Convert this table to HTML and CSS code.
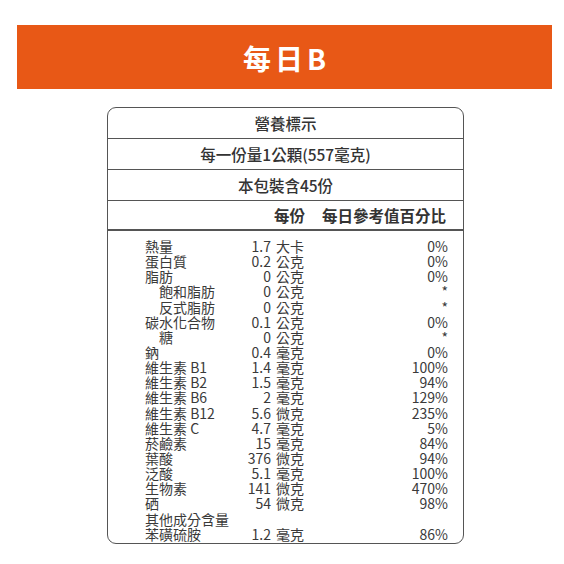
FILE: index.html
```html
<!DOCTYPE html>
<html lang="zh-Hant">
<head>
<meta charset="utf-8">
<link rel="stylesheet" href="styles.css">
</head>
<body>
<div class="page">
  <div class="banner">每日B</div>
  <div class="label">
    <div class="hrow">營養標示</div>
    <div class="hrow">每一份量1公顆(557毫克)</div>
    <div class="hrow">本包裝含45份</div>
    <div class="hrow colhead"><span class="ch1">每份</span><span class="ch2">每日參考值百分比</span></div>
    <div class="data">
      <span>熱量</span><span class="amt">1.7</span><span>大卡</span><span class="pct">0%</span>
      <span>蛋白質</span><span class="amt">0.2</span><span>公克</span><span class="pct">0%</span>
      <span>脂肪</span><span class="amt">0</span><span>公克</span><span class="pct">0%</span>
      <span class="ind">飽和脂肪</span><span class="amt">0</span><span>公克</span><span class="pct">*</span>
      <span class="ind">反式脂肪</span><span class="amt">0</span><span>公克</span><span class="pct">*</span>
      <span>碳水化合物</span><span class="amt">0.1</span><span>公克</span><span class="pct">0%</span>
      <span class="ind">糖</span><span class="amt">0</span><span>公克</span><span class="pct">*</span>
      <span>鈉</span><span class="amt">0.4</span><span>毫克</span><span class="pct">0%</span>
      <span>維生素 B1</span><span class="amt">1.4</span><span>毫克</span><span class="pct">100%</span>
      <span>維生素 B2</span><span class="amt">1.5</span><span>毫克</span><span class="pct">94%</span>
      <span>維生素 B6</span><span class="amt">2</span><span>毫克</span><span class="pct">129%</span>
      <span>維生素 B12</span><span class="amt">5.6</span><span>微克</span><span class="pct">235%</span>
      <span>維生素 C</span><span class="amt">4.7</span><span>毫克</span><span class="pct">5%</span>
      <span>菸鹼素</span><span class="amt">15</span><span>毫克</span><span class="pct">84%</span>
      <span>葉酸</span><span class="amt">376</span><span>微克</span><span class="pct">94%</span>
      <span>泛酸</span><span class="amt">5.1</span><span>毫克</span><span class="pct">100%</span>
      <span>生物素</span><span class="amt">141</span><span>微克</span><span class="pct">470%</span>
      <span>硒</span><span class="amt">54</span><span>微克</span><span class="pct">98%</span>
      <span>其他成分含量</span><span class="amt"></span><span></span><span class="pct"></span>
      <span>苯磺硫胺</span><span class="amt">1.2</span><span>毫克</span><span class="pct">86%</span>
    </div>
  </div>
</div>
</body>
</html>
```
FILE: styles.css
```css
* { box-sizing: border-box; }
html, body { margin: 0; padding: 0; background: #fff; }
body {
  font-family: "Noto Sans CJK TC", "Noto Sans", sans-serif;
  color: #333;
  width: 564px;
  height: 564px;
  overflow: hidden;
}
.page {
  padding-top: 25px;
  display: flex;
  flex-direction: column;
  align-items: flex-start;
}
.banner {
  width: 535px;
  margin-left: 17px;
  height: 64px;
  background: #e85816;
  color: #fff;
  font-size: 28px;
  font-weight: 700;
  display: flex;
  align-items: center;
  justify-content: center;
  letter-spacing: 4px;
  padding-left: 4px;
  padding-top: 2px;
}
.label {
  margin-top: 18px;
  margin-left: 107px;
  width: 357px;
  height: 437px;
  border: 1.5px solid #555;
  border-radius: 9px;
  display: flex;
  flex-direction: column;
}
.hrow {
  height: 31px;
  border-bottom: 1.5px solid #555;
  display: flex;
  align-items: center;
  justify-content: center;
  font-size: 15.5px;
  font-weight: 500;
  color: #333;
}
.colhead {
  height: 30px;
  justify-content: flex-start;
  font-weight: 700;
  font-size: 15.5px;
  border-bottom-width: 2px;
}
.ch1 { margin-left: 166px; }
.ch2 { margin-left: 17px; }
.data {
  padding: 8px 15px 0 37px;
  display: grid;
  grid-template-columns: 95px 36px 30px 1fr;
  grid-auto-rows: 15.15px;
  column-gap: 0;
  font-size: 14px;
  line-height: 15.15px;
  color: #3a3a3a;
}
.amt { text-align: right; padding-right: 5px; }
.pct { text-align: right; }
.ind { padding-left: 14px; }
```
